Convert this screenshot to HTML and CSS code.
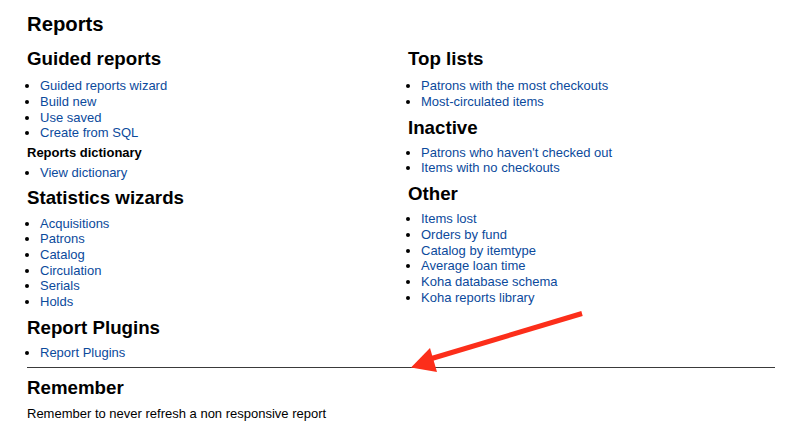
FILE: index.html
```html
<!DOCTYPE html>
<html>
<head>
<meta charset="utf-8">
<title>Reports</title>
<link rel="stylesheet" href="styles.css">
</head>
<body>
<div class="page">
  <h1 class="title">Reports</h1>
  <div class="columns">
    <div class="col">
      <h3 class="sec">Guided reports</h3>
      <ul class="links">
        <li><a href="#">Guided reports wizard</a></li>
        <li><a href="#">Build new</a></li>
        <li><a href="#">Use saved</a></li>
        <li><a href="#">Create from SQL</a></li>
      </ul>
      <h5 class="sub">Reports dictionary</h5>
      <ul class="links">
        <li><a href="#">View dictionary</a></li>
      </ul>
      <h3 class="sec">Statistics wizards</h3>
      <ul class="links">
        <li><a href="#">Acquisitions</a></li>
        <li><a href="#">Patrons</a></li>
        <li><a href="#">Catalog</a></li>
        <li><a href="#">Circulation</a></li>
        <li><a href="#">Serials</a></li>
        <li><a href="#">Holds</a></li>
      </ul>
      <h3 class="sec">Report Plugins</h3>
      <ul class="links">
        <li><a href="#">Report Plugins</a></li>
      </ul>
    </div>
    <div class="col">
      <h3 class="sec">Top lists</h3>
      <ul class="links">
        <li><a href="#">Patrons with the most checkouts</a></li>
        <li><a href="#">Most-circulated items</a></li>
      </ul>
      <h3 class="sec">Inactive</h3>
      <ul class="links">
        <li><a href="#">Patrons who haven't checked out</a></li>
        <li><a href="#">Items with no checkouts</a></li>
      </ul>
      <h3 class="sec">Other</h3>
      <ul class="links">
        <li><a href="#">Items lost</a></li>
        <li><a href="#">Orders by fund</a></li>
        <li><a href="#">Catalog by itemtype</a></li>
        <li><a href="#">Average loan time</a></li>
        <li><a href="#">Koha database schema</a></li>
        <li><a href="#">Koha reports library</a></li>
      </ul>
    </div>
  </div>
  <div class="rule"></div>
  <h3 class="sec remember">Remember</h3>
  <p class="note">Remember to never refresh a non responsive report</p>
</div>
<svg class="arrow" width="785" height="431" viewBox="0 0 785 431" xmlns="http://www.w3.org/2000/svg">
  <line x1="582" y1="313.5" x2="430" y2="359" stroke="#fc2e1a" stroke-width="5"/>
  <polygon points="411,367.5 430,348 437,372" fill="#fc2e1a"/>
</svg>
</body>
</html>
```

FILE: styles.css
```css
html, body {
  margin: 0;
  padding: 0;
  background: #fff;
}
body {
  font-family: "Liberation Sans", Arial, Helvetica, sans-serif;
  font-size: 13px;
  color: #000;
  width: 785px;
  height: 431px;
  overflow: hidden;
  position: relative;
}
.page {
  padding: 12px 10px 0 27px;
}
.title {
  margin: 0;
  font-size: 20.3px;
  line-height: 24px;
  font-weight: bold;
}
.columns {
  display: grid;
  grid-template-columns: 381px 1fr;
  margin-top: 12px;
}
.sec {
  margin: 7px 0 6.2px;
  font-size: 18.72px;
  line-height: 22px;
  font-weight: bold;
}
.col > .sec:first-child {
  margin-top: 0;
  margin-bottom: 8.2px;
}
.sub {
  margin: 3.7px 0 4.3px;
  font-size: 13px;
  line-height: 15.7px;
  font-weight: bold;
}
.links {
  margin: 0;
  padding-left: 13px;
  list-style: disc;
}
.links li {
  line-height: 15.7px;
}
.links a {
  color: #0b4a9c;
  text-decoration: none;
}
.rule {
  margin-top: 6px;
  height: 1px;
  background: #3a3a3a;
  width: 748px;
}
.remember {
  margin-top: 9.8px;
  margin-bottom: 6.1px;
}
.note {
  margin: 0;
  line-height: 15.7px;
}
.arrow {
  position: absolute;
  left: 0;
  top: 0;
  pointer-events: none;
}
```
